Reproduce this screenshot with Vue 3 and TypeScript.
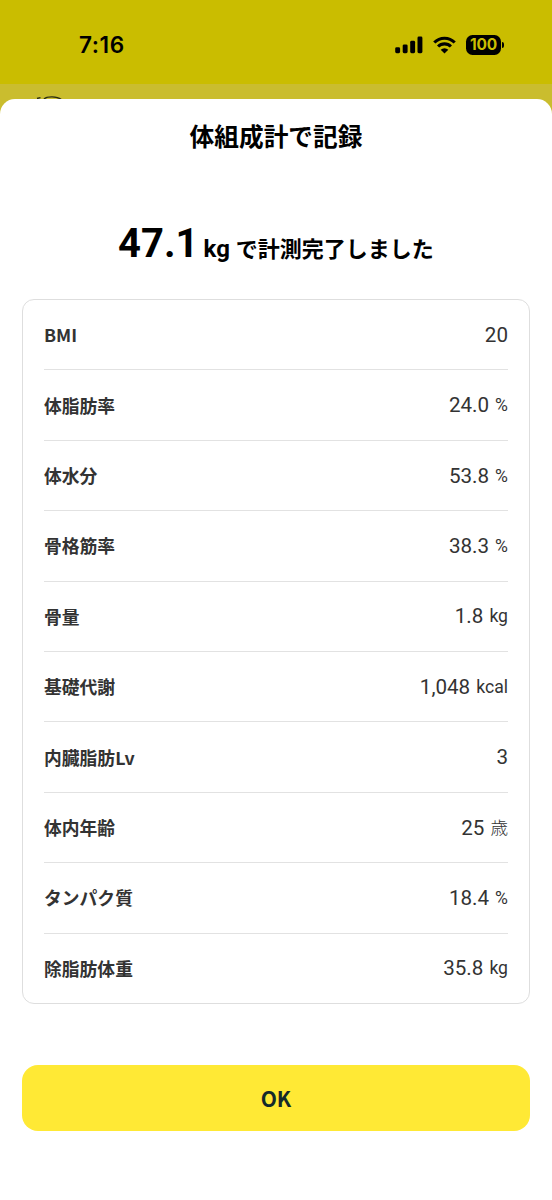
<script setup lang="ts">
interface Metric {
  label: string
  value: string
  unit?: string
}

const metrics: Metric[] = [
  { label: 'BMI', value: '20' },
  { label: '体脂肪率', value: '24.0', unit: '%' },
  { label: '体水分', value: '53.8', unit: '%' },
  { label: '骨格筋率', value: '38.3', unit: '%' },
  { label: '骨量', value: '1.8', unit: 'kg' },
  { label: '基礎代謝', value: '1,048', unit: 'kcal' },
  { label: '内臓脂肪Lv', value: '3' },
  { label: '体内年齢', value: '25', unit: '歳' },
  { label: 'タンパク質', value: '18.4', unit: '%' },
  { label: '除脂肪体重', value: '35.8', unit: 'kg' },
]
</script>

<template>
  <div class="screen">
    <header class="status">
      <span class="clock">7:16</span>
      <div class="indicators">
        <svg class="signal" width="28" height="18" viewBox="0 0 28 18">
          <rect x="0.2" y="11.3" width="4.9" height="5.9" rx="1.4" />
          <rect x="7.7" y="8.4" width="4.9" height="8.8" rx="1.4" />
          <rect x="15.2" y="4.8" width="4.9" height="12.4" rx="1.4" />
          <rect x="22.5" y="0.6" width="4.9" height="16.6" rx="1.4" />
        </svg>
        <svg class="wifi" width="23" height="18" viewBox="0 0 23 18">
          <path d="M1.3 6.5a14.4 14.4 0 0 1 20.4 0M5.1 10.5a9 9 0 0 1 12.8 0" fill="none" stroke="#000" stroke-width="3.1" />
          <path d="M11.5 17.4 7.7 13.7a5.4 5.4 0 0 1 7.6 0z" />
        </svg>
        <div class="battery">100</div>
        <div class="battery-tip"></div>
      </div>
    </header>
    <div class="backdrop">
      <svg width="32" height="15" viewBox="0 0 32 15">
        <path d="M1 14.5 4.5 13.6M8 15C11 12.1 21 12.1 25 15.4" fill="none" stroke="#292b12" stroke-width="1.4" />
      </svg>
    </div>
    <main class="sheet">
      <h1>体組成計で記録</h1>
      <p class="result"><span class="weight">47.1</span><span class="weight-unit">kg</span><span class="message">で計測完了しました</span></p>
      <dl class="card">
        <div v-for="m in metrics" :key="m.label" class="row">
          <dt>{{ m.label }}</dt>
          <dd>
            <span class="value">{{ m.value }}</span>
            <span v-if="m.unit" class="unit">{{ m.unit }}</span>
          </dd>
        </div>
      </dl>
      <button type="button">OK</button>
    </main>
  </div>
</template>

<style>
body {
  background: #cabd2e;
}
</style>

<style scoped>
.screen {
  box-sizing: border-box;
  height: 1200px;
  overflow: hidden;
  display: flex;
  flex-direction: column;
  background: #cabd2e;
  font-family: Roboto, "Noto Sans CJK JP", sans-serif;
}
.status {
  box-sizing: border-box;
  height: 84px;
  flex: none;
  display: flex;
  justify-content: space-between;
  align-items: center;
  padding: 6px 48px 0 79px;
  background: #cabd00;
  color: #000;
}
.clock {
  font: 600 22.6px/28px Inter, sans-serif;
  letter-spacing: 0.55px;
}
.indicators {
  display: flex;
  align-items: center;
}
.wifi {
  margin-left: 10px;
}
.battery {
  width: 35px;
  height: 20px;
  margin-left: 10px;
  border-radius: 6.5px;
  background: #000;
  color: #cabd00;
  font: 700 15.5px/20px Inter, sans-serif;
  letter-spacing: -0.2px;
  text-align: center;
}
.battery-tip {
  width: 2px;
  height: 6px;
  margin-left: 1px;
  border-radius: 0 2px 2px 0;
  background: #000;
}
.backdrop {
  height: 15px;
  flex: none;
  padding-left: 36px;
}
.backdrop svg {
  display: block;
}
.sheet {
  flex: 1;
  display: flex;
  flex-direction: column;
  padding: 0 22px;
  border-radius: 15px 15px 0 0;
  background: #fff;
}
h1 {
  margin: 18px 0 0;
  color: #000;
  font: 700 24.7px/36px "Noto Sans CJK JP", sans-serif;
  text-align: center;
}
.result {
  display: flex;
  justify-content: center;
  align-items: baseline;
  height: 60px;
  margin: 61px 0 0;
  color: #000;
  line-height: 60px;
}
.weight {
  font-size: 40px;
  font-weight: 700;
}
.weight-unit {
  margin-left: 5px;
  font-size: 24px;
  font-weight: 700;
}
.message {
  margin-left: 6px;
  font: 700 22px/32px "Noto Sans CJK JP", sans-serif;
}
.card {
  box-sizing: border-box;
  height: 705px;
  margin: 25px 0 0;
  padding: 0 21px;
  display: flex;
  flex-direction: column;
  border: 1px solid #dedede;
  border-radius: 12px;
}
.row {
  flex: 1;
  display: flex;
  justify-content: space-between;
  align-items: center;
  color: #333;
}
.row + .row {
  border-top: 1px solid #e2e2e2;
}
dt {
  padding-bottom: 1px;
  font: 700 17.8px/26px "Noto Sans CJK JP", sans-serif;
}
dd {
  display: flex;
  align-items: center;
  margin: 0;
}
.value {
  font-size: 20.6px;
  line-height: 26px;
}
.unit {
  margin-left: 6px;
  font-size: 17.6px;
  font-family: Roboto, "Noto Sans CJK JP Light", "Noto Sans CJK JP", sans-serif;
  line-height: 26px;
}
button {
  height: 66px;
  margin: 61px 0 0;
  padding: 0;
  border: 0;
  border-radius: 16px;
  background: #ffe935;
  color: #142a2a;
  font: 700 21px/66px "Noto Sans CJK JP", sans-serif;
}
</style>
